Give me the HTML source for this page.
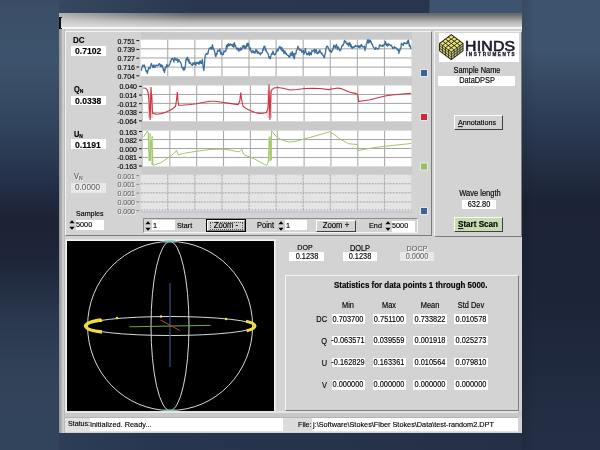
<!DOCTYPE html>
<html><head><meta charset="utf-8"><style>
*{margin:0;padding:0;box-sizing:border-box}
html,body{width:600px;height:450px;overflow:hidden}
body{position:relative;background:#26344e;font-family:"Liberation Sans", sans-serif;}
.a{position:absolute}
.t{position:absolute;white-space:nowrap;line-height:1;will-change:transform;-webkit-text-stroke:0.14px currentColor;transform:scaleY(1.1);transform-origin:0 70%}
</style></head><body>
<div class="a" style="left:0;top:0;width:59px;height:450px;background:linear-gradient(180deg,#3a4c64 0px,#3b5068 12px,#3d526c 60px,#33465f 120px,#25304a 180px,#1c2234 220px,#1e2538 260px,#2a384f 320px,#324359 380px,#32445c 450px)"></div>
<div class="a" style="left:522px;top:0;width:78px;height:450px;background:linear-gradient(180deg,#3e546e 0px,#3e546e 50px,#2c3c56 120px,#1c2336 200px,#1c2438 300px,#232e44 420px,#242f46 450px)"></div>
<div class="a" style="left:59px;top:433px;width:463px;height:17px;background:linear-gradient(90deg,#2e3e58 0px,#28354e 100px,#262f48 463px)"></div>
<div class="a" style="left:59px;top:0;width:463px;height:13px;background:linear-gradient(90deg,#36485f 0px,#2a374e 140px,#29354d 370px,#3e546e 371px,#3e546e 463px)"></div>
<div class="a" style="left:522px;top:0;width:14px;height:450px;background:linear-gradient(90deg,rgba(10,14,24,0.12),rgba(10,14,24,0))"></div>
<div class="a" style="left:59px;top:13px;width:463px;height:420px;background:#d3d3d3;"></div>
<div class="a" style="left:59px;top:13px;width:463px;height:19px;background:linear-gradient(180deg,#62686c 0px,#6c7074 2px,#808486 4px,#9c9e9e 6.5px,#b6b6b6 9px,#c8c8c8 12px,#d4d4d4 13.8px,#f6f6f6 14.4px,#f6f6f6 15.6px,#cdcdcd 16.2px,#d2d2d2 18px)"></div>
<div class="a" style="left:59px;top:13px;width:463px;height:14px;background:linear-gradient(90deg,rgba(225,225,225,0.6) 0px,rgba(225,225,225,0.35) 50px,rgba(225,225,225,0) 130px)"></div>
<div class="a" style="left:59px;top:17px;width:1.7999999999999972px;height:12px;background:#111;"></div>
<div class="a" style="left:59px;top:17px;width:2.799999999999997px;height:1.3000000000000007px;background:#111;"></div>
<div class="a" style="left:59px;top:27.5px;width:2.799999999999997px;height:1.5px;background:#111;"></div>
<div class="a" style="left:59px;top:29px;width:6px;height:404px;background:linear-gradient(90deg,#9a9a9a 0px,#a4a4a4 2px,#d6d6d6 4px,#b0b0b0 6px)"></div>
<div class="a" style="left:65px;top:31px;width:367px;height:205px;border-top:1px solid #f4f4f4;border-left:1px solid #f4f4f4;border-right:1px solid #7c7c7c;border-bottom:1px solid #7c7c7c"></div>
<div class="a" style="left:434px;top:31px;width:88px;height:206px;border-top:1px solid #f4f4f4;border-left:1px solid #f4f4f4;border-right:1px solid #7c7c7c;border-bottom:1px solid #7c7c7c"></div>
<div class="a" style="left:141px;top:32px;width:271px;height:181px;background:#cacaca;"></div>
<svg class="a" style="left:0;top:0" width="600" height="450" viewBox="0 0 600 450">
<rect x="140.7" y="39.7" width="270.8" height="36.5" fill="#ffffff"/>
<line x1="167.78" y1="39.7" x2="167.78" y2="76.2" stroke="#a4a4a4" stroke-width="1"/>
<line x1="194.86" y1="39.7" x2="194.86" y2="76.2" stroke="#a4a4a4" stroke-width="1"/>
<line x1="221.94" y1="39.7" x2="221.94" y2="76.2" stroke="#a4a4a4" stroke-width="1"/>
<line x1="249.02" y1="39.7" x2="249.02" y2="76.2" stroke="#a4a4a4" stroke-width="1"/>
<line x1="276.10" y1="39.7" x2="276.10" y2="76.2" stroke="#a4a4a4" stroke-width="1"/>
<line x1="303.18" y1="39.7" x2="303.18" y2="76.2" stroke="#a4a4a4" stroke-width="1"/>
<line x1="330.26" y1="39.7" x2="330.26" y2="76.2" stroke="#a4a4a4" stroke-width="1"/>
<line x1="357.34" y1="39.7" x2="357.34" y2="76.2" stroke="#a4a4a4" stroke-width="1"/>
<line x1="384.42" y1="39.7" x2="384.42" y2="76.2" stroke="#a4a4a4" stroke-width="1"/>
<line x1="140.7" y1="48.83" x2="411.5" y2="48.83" stroke="#a4a4a4" stroke-width="1"/>
<line x1="140.7" y1="57.95" x2="411.5" y2="57.95" stroke="#a4a4a4" stroke-width="1"/>
<line x1="140.7" y1="67.08" x2="411.5" y2="67.08" stroke="#a4a4a4" stroke-width="1"/>
<rect x="143.0" y="85.5" width="268.5" height="35.8" fill="#ffffff"/>
<line x1="169.85" y1="85.5" x2="169.85" y2="121.3" stroke="#a4a4a4" stroke-width="1"/>
<line x1="196.70" y1="85.5" x2="196.70" y2="121.3" stroke="#a4a4a4" stroke-width="1"/>
<line x1="223.55" y1="85.5" x2="223.55" y2="121.3" stroke="#a4a4a4" stroke-width="1"/>
<line x1="250.40" y1="85.5" x2="250.40" y2="121.3" stroke="#a4a4a4" stroke-width="1"/>
<line x1="277.25" y1="85.5" x2="277.25" y2="121.3" stroke="#a4a4a4" stroke-width="1"/>
<line x1="304.10" y1="85.5" x2="304.10" y2="121.3" stroke="#a4a4a4" stroke-width="1"/>
<line x1="330.95" y1="85.5" x2="330.95" y2="121.3" stroke="#a4a4a4" stroke-width="1"/>
<line x1="357.80" y1="85.5" x2="357.80" y2="121.3" stroke="#a4a4a4" stroke-width="1"/>
<line x1="384.65" y1="85.5" x2="384.65" y2="121.3" stroke="#a4a4a4" stroke-width="1"/>
<line x1="143.0" y1="94.45" x2="411.5" y2="94.45" stroke="#a4a4a4" stroke-width="1"/>
<line x1="143.0" y1="103.40" x2="411.5" y2="103.40" stroke="#a4a4a4" stroke-width="1"/>
<line x1="143.0" y1="112.35" x2="411.5" y2="112.35" stroke="#a4a4a4" stroke-width="1"/>
<rect x="143.0" y="130.6" width="268.5" height="35.80000000000001" fill="#ffffff"/>
<line x1="169.85" y1="130.6" x2="169.85" y2="166.4" stroke="#a4a4a4" stroke-width="1"/>
<line x1="196.70" y1="130.6" x2="196.70" y2="166.4" stroke="#a4a4a4" stroke-width="1"/>
<line x1="223.55" y1="130.6" x2="223.55" y2="166.4" stroke="#a4a4a4" stroke-width="1"/>
<line x1="250.40" y1="130.6" x2="250.40" y2="166.4" stroke="#a4a4a4" stroke-width="1"/>
<line x1="277.25" y1="130.6" x2="277.25" y2="166.4" stroke="#a4a4a4" stroke-width="1"/>
<line x1="304.10" y1="130.6" x2="304.10" y2="166.4" stroke="#a4a4a4" stroke-width="1"/>
<line x1="330.95" y1="130.6" x2="330.95" y2="166.4" stroke="#a4a4a4" stroke-width="1"/>
<line x1="357.80" y1="130.6" x2="357.80" y2="166.4" stroke="#a4a4a4" stroke-width="1"/>
<line x1="384.65" y1="130.6" x2="384.65" y2="166.4" stroke="#a4a4a4" stroke-width="1"/>
<line x1="143.0" y1="139.55" x2="411.5" y2="139.55" stroke="#a4a4a4" stroke-width="1"/>
<line x1="143.0" y1="148.50" x2="411.5" y2="148.50" stroke="#a4a4a4" stroke-width="1"/>
<line x1="143.0" y1="157.45" x2="411.5" y2="157.45" stroke="#a4a4a4" stroke-width="1"/>
<rect x="140.7" y="174.7" width="270.8" height="36.30000000000001" fill="#e4e4e4"/>
<line x1="167.78" y1="174.7" x2="167.78" y2="211" stroke="#a4a4a4" stroke-width="1" stroke-dasharray="2 1"/>
<line x1="194.86" y1="174.7" x2="194.86" y2="211" stroke="#a4a4a4" stroke-width="1" stroke-dasharray="2 1"/>
<line x1="221.94" y1="174.7" x2="221.94" y2="211" stroke="#a4a4a4" stroke-width="1" stroke-dasharray="2 1"/>
<line x1="249.02" y1="174.7" x2="249.02" y2="211" stroke="#a4a4a4" stroke-width="1" stroke-dasharray="2 1"/>
<line x1="276.10" y1="174.7" x2="276.10" y2="211" stroke="#a4a4a4" stroke-width="1" stroke-dasharray="2 1"/>
<line x1="303.18" y1="174.7" x2="303.18" y2="211" stroke="#a4a4a4" stroke-width="1" stroke-dasharray="2 1"/>
<line x1="330.26" y1="174.7" x2="330.26" y2="211" stroke="#a4a4a4" stroke-width="1" stroke-dasharray="2 1"/>
<line x1="357.34" y1="174.7" x2="357.34" y2="211" stroke="#a4a4a4" stroke-width="1" stroke-dasharray="2 1"/>
<line x1="384.42" y1="174.7" x2="384.42" y2="211" stroke="#a4a4a4" stroke-width="1" stroke-dasharray="2 1"/>
<line x1="140.7" y1="183.77" x2="411.5" y2="183.77" stroke="#a4a4a4" stroke-width="1" stroke-dasharray="2 1"/>
<line x1="140.7" y1="192.85" x2="411.5" y2="192.85" stroke="#a4a4a4" stroke-width="1" stroke-dasharray="2 1"/>
<line x1="140.7" y1="201.93" x2="411.5" y2="201.93" stroke="#a4a4a4" stroke-width="1" stroke-dasharray="2 1"/>
<path d="M140.9 70.5 L141.4 69.9 L141.9 67.5 L142.4 66.2 L142.9 65.0 L143.4 65.4 L143.9 66.4 L144.4 65.1 L144.9 67.3 L145.4 68.4 L145.9 70.6 L146.4 71.7 L146.9 70.8 L147.4 73.5 L147.9 70.6 L148.4 69.0 L148.9 67.3 L149.4 68.0 L149.9 68.7 L150.4 66.7 L150.9 65.1 L151.4 63.4 L151.9 65.5 L152.4 65.7 L152.9 67.6 L153.4 67.0 L153.9 65.0 L154.4 67.3 L154.9 66.1 L155.4 67.0 L155.9 65.1 L156.4 65.1 L156.9 65.3 L157.4 65.3 L157.9 65.8 L158.4 65.0 L158.9 64.0 L159.4 63.6 L159.9 64.3 L160.4 66.5 L160.9 64.3 L161.4 66.1 L161.9 66.9 L162.4 65.4 L162.9 67.8 L163.4 70.5 L163.9 69.2 L164.4 72.6 L164.9 70.4 L165.4 67.1 L165.9 67.7 L166.4 66.5 L166.9 64.4 L167.4 66.6 L167.9 65.9 L168.4 65.9 L168.9 66.1 L169.4 64.6 L169.9 64.0 L170.4 61.1 L170.9 61.8 L171.4 58.8 L171.9 59.0 L172.4 58.4 L172.9 59.1 L173.4 59.9 L173.9 62.1 L174.4 57.8 L174.9 57.9 L175.4 59.4 L175.9 60.3 L176.4 60.2 L176.9 58.6 L177.4 59.1 L177.9 62.3 L178.4 60.5 L178.9 59.6 L179.4 61.5 L179.9 61.7 L180.4 61.9 L180.9 63.3 L181.4 64.9 L181.9 67.6 L182.4 67.7 L182.9 68.8 L183.4 70.1 L183.9 67.3 L184.4 69.9 L184.9 68.7 L185.4 65.7 L185.9 59.8 L186.4 58.4 L186.9 59.9 L187.4 57.3 L187.9 59.7 L188.4 61.6 L188.9 59.4 L189.4 63.4 L189.9 62.8 L190.4 62.6 L190.9 63.8 L191.4 64.8 L191.9 64.5 L192.4 65.4 L192.9 63.0 L193.4 62.9 L193.9 64.3 L194.4 63.1 L194.9 62.2 L195.4 64.4 L195.9 65.2 L196.4 63.1 L196.9 62.1 L197.4 63.4 L197.9 63.1 L198.4 62.7 L198.9 64.4 L199.4 61.4 L199.9 63.7 L200.4 61.0 L200.9 61.8 L201.4 63.7 L201.9 61.1 L202.4 59.5 L202.9 63.9 L203.4 68.7 L203.9 70.5 L204.4 65.2 L204.9 58.6 L205.4 54.9 L205.9 54.8 L206.4 53.6 L206.9 54.0 L207.4 53.3 L207.9 54.0 L208.4 51.1 L208.9 49.2 L209.4 48.3 L209.9 47.9 L210.4 48.8 L210.9 47.2 L211.4 47.9 L211.9 49.4 L212.4 44.7 L212.9 46.9 L213.4 48.9 L213.9 49.6 L214.4 50.5 L214.9 52.3 L215.4 56.0 L215.9 56.6 L216.4 53.5 L216.9 54.6 L217.4 50.8 L217.9 50.0 L218.4 50.9 L218.9 51.1 L219.4 51.6 L219.9 49.0 L220.4 52.1 L220.9 54.3 L221.4 52.3 L221.9 53.8 L222.4 54.7 L222.9 54.2 L223.4 54.6 L223.9 50.6 L224.4 51.8 L224.9 51.5 L225.4 51.6 L225.9 51.0 L226.4 45.5 L226.9 48.7 L227.4 44.6 L227.9 46.6 L228.4 43.6 L228.9 45.0 L229.4 45.6 L229.9 43.8 L230.4 44.3 L230.9 45.2 L231.4 44.6 L231.9 44.5 L232.4 46.4 L232.9 45.6 L233.4 43.9 L233.9 47.3 L234.4 42.6 L234.9 45.8 L235.4 45.4 L235.9 46.9 L236.4 48.5 L236.9 49.0 L237.4 49.9 L237.9 47.9 L238.4 48.4 L238.9 51.4 L239.4 49.7 L239.9 49.0 L240.4 47.8 L240.9 50.3 L241.4 49.0 L241.9 49.4 L242.4 46.3 L242.9 47.0 L243.4 45.4 L243.9 47.2 L244.4 48.3 L244.9 45.6 L245.4 48.6 L245.9 48.1 L246.4 46.9 L246.9 43.6 L247.4 46.2 L247.9 43.2 L248.4 43.7 L248.9 46.4 L249.4 48.1 L249.9 50.1 L250.4 47.9 L250.9 51.0 L251.4 52.1 L251.9 52.7 L252.4 50.9 L252.9 50.4 L253.4 52.5 L253.9 51.6 L254.4 51.8 L254.9 53.4 L255.4 51.6 L255.9 49.4 L256.4 51.7 L256.9 50.1 L257.4 53.3 L257.9 52.9 L258.4 51.9 L258.9 52.8 L259.4 53.9 L259.9 53.3 L260.4 54.9 L260.9 52.8 L261.4 53.3 L261.9 53.0 L262.4 52.3 L262.9 48.9 L263.4 50.1 L263.9 46.4 L264.4 46.9 L264.9 46.2 L265.4 50.7 L265.9 49.0 L266.4 51.3 L266.9 51.9 L267.4 52.8 L267.9 53.0 L268.4 55.0 L268.9 57.8 L269.4 56.8 L269.9 58.4 L270.4 58.7 L270.9 56.1 L271.4 53.7 L271.9 53.4 L272.4 54.1 L272.9 51.0 L273.4 52.5 L273.9 54.7 L274.4 54.8 L274.9 54.2 L275.4 54.4 L275.9 53.0 L276.4 50.8 L276.9 49.7 L277.4 50.1 L277.9 51.2 L278.4 48.8 L278.9 47.8 L279.4 47.3 L279.9 46.4 L280.4 48.5 L280.9 47.8 L281.4 50.1 L281.9 47.4 L282.4 51.2 L282.9 50.7 L283.4 49.9 L283.9 53.6 L284.4 53.1 L284.9 51.0 L285.4 52.7 L285.9 54.1 L286.4 53.4 L286.9 54.9 L287.4 55.0 L287.9 55.4 L288.4 55.5 L288.9 57.1 L289.4 56.9 L289.9 57.1 L290.4 53.2 L290.9 55.6 L291.4 55.1 L291.9 52.3 L292.4 51.6 L292.9 56.1 L293.4 53.6 L293.9 57.9 L294.4 58.7 L294.9 53.3 L295.4 53.7 L295.9 53.8 L296.4 50.3 L296.9 49.9 L297.4 49.1 L297.9 46.2 L298.4 47.8 L298.9 48.9 L299.4 50.1 L299.9 49.8 L300.4 50.2 L300.9 49.5 L301.4 50.6 L301.9 52.4 L302.4 51.8 L302.9 50.7 L303.4 50.6 L303.9 54.4 L304.4 52.5 L304.9 51.8 L305.4 48.4 L305.9 52.7 L306.4 53.0 L306.9 54.9 L307.4 53.9 L307.9 53.5 L308.4 54.4 L308.9 51.7 L309.4 55.3 L309.9 54.4 L310.4 52.7 L310.9 54.5 L311.4 54.6 L311.9 50.4 L312.4 50.8 L312.9 51.4 L313.4 50.8 L313.9 49.9 L314.4 49.4 L314.9 53.1 L315.4 52.0 L315.9 49.6 L316.4 49.6 L316.9 53.3 L317.4 52.6 L317.9 53.8 L318.4 52.8 L318.9 51.0 L319.4 52.5 L319.9 49.9 L320.4 51.7 L320.9 52.7 L321.4 53.9 L321.9 53.0 L322.4 54.2 L322.9 55.3 L323.4 55.8 L323.9 57.2 L324.4 57.7 L324.9 54.7 L325.4 52.8 L325.9 49.2 L326.4 47.2 L326.9 46.4 L327.4 46.2 L327.9 46.8 L328.4 48.3 L328.9 49.2 L329.4 50.6 L329.9 51.4 L330.4 50.2 L330.9 51.9 L331.4 52.4 L331.9 51.2 L332.4 49.6 L332.9 49.5 L333.4 47.0 L333.9 45.1 L334.4 46.9 L334.9 45.9 L335.4 48.0 L335.9 46.0 L336.4 44.4 L336.9 46.3 L337.4 49.5 L337.9 47.7 L338.4 47.0 L338.9 48.2 L339.4 50.2 L339.9 50.7 L340.4 49.5 L340.9 49.8 L341.4 47.7 L341.9 45.7 L342.4 45.2 L342.9 45.7 L343.4 44.2 L343.9 43.6 L344.4 40.5 L344.9 41.0 L345.4 42.2 L345.9 41.6 L346.4 43.6 L346.9 43.6 L347.4 44.4 L347.9 43.1 L348.4 46.1 L348.9 44.5 L349.4 42.6 L349.9 42.8 L350.4 46.6 L350.9 44.4 L351.4 47.0 L351.9 48.2 L352.4 48.3 L352.9 46.6 L353.4 47.5 L353.9 47.1 L354.4 47.3 L354.9 46.2 L355.4 45.4 L355.9 46.5 L356.4 46.3 L356.9 46.0 L357.4 46.0 L357.9 46.0 L358.4 47.4 L358.9 45.7 L359.4 46.6 L359.9 47.6 L360.4 45.7 L360.9 46.6 L361.4 44.4 L361.9 45.6 L362.4 46.7 L362.9 47.1 L363.4 46.8 L363.9 47.1 L364.4 46.3 L364.9 50.5 L365.4 48.0 L365.9 47.3 L366.4 43.7 L366.9 43.2 L367.4 40.0 L367.9 42.7 L368.4 42.9 L368.9 39.6 L369.4 41.7 L369.9 42.5 L370.4 40.4 L370.9 41.2 L371.4 42.9 L371.9 44.3 L372.4 44.2 L372.9 46.3 L373.4 46.9 L373.9 47.7 L374.4 48.1 L374.9 49.4 L375.4 49.4 L375.9 47.1 L376.4 48.5 L376.9 48.4 L377.4 48.9 L377.9 49.4 L378.4 48.7 L378.9 48.4 L379.4 45.2 L379.9 44.7 L380.4 46.0 L380.9 45.8 L381.4 45.6 L381.9 45.9 L382.4 45.1 L382.9 46.5 L383.4 45.8 L383.9 44.9 L384.4 43.9 L384.9 44.2 L385.4 41.4 L385.9 43.8 L386.4 45.3 L386.9 43.9 L387.4 46.2 L387.9 45.9 L388.4 43.8 L388.9 44.8 L389.4 44.3 L389.9 44.9 L390.4 45.5 L390.9 45.5 L391.4 45.2 L391.9 46.7 L392.4 47.5 L392.9 48.7 L393.4 48.3 L393.9 47.3 L394.4 46.8 L394.9 48.0 L395.4 47.8 L395.9 47.5 L396.4 48.8 L396.9 48.5 L397.4 49.4 L397.9 50.3 L398.4 49.7 L398.9 53.4 L399.4 50.2 L399.9 50.6 L400.4 48.4 L400.9 48.3 L401.4 43.2 L401.9 44.1 L402.4 44.5 L402.9 44.3 L403.4 45.6 L403.9 42.6 L404.4 43.4 L404.9 43.2 L405.4 43.7 L405.9 43.5 L406.4 43.1 L406.9 43.8 L407.4 41.2 L407.9 43.0 L408.4 40.1 L408.9 42.9 L409.4 46.4 L409.9 45.0 L410.4 46.7 L410.9 49.0" fill="none" stroke="#3d6f9e" stroke-width="1.3" stroke-linejoin="round"/>
<rect x="148" y="95" width="5" height="23" fill="#f4c4c8"/><rect x="267.5" y="90" width="4.5" height="28" fill="#f4c4c8"/>
<path d="M143.0 88.0 L145.5 88.2 L147.0 89.5 L148.0 92.0 L148.8 98.0 L149.5 110.0 L150.2 120.0 L150.6 100.0 L151.0 87.0 L151.8 100.0 L152.5 113.0 L154.0 113.6 L157.0 114.2 L161.0 113.6 L165.0 112.5 L169.0 110.7 L173.0 108.5 L175.5 106.5 L176.5 100.0 L177.3 92.0 L178.0 101.0 L178.6 105.2 L182.3 105.3 L190.0 104.5 L196.3 103.7 L204.0 102.3 L210.3 101.3 L215.0 101.2 L222.0 102.2 L231.3 103.6 L238.0 104.6 L239.8 101.0 L240.7 92.5 L241.5 99.0 L243.0 106.0 L246.0 108.6 L250.0 110.5 L255.0 112.5 L259.3 113.4 L263.0 113.3 L266.5 112.5 L268.0 108.0 L268.6 98.0 L269.0 84.5 L269.5 105.0 L269.9 120.0 L270.5 103.0 L271.0 92.0 L272.0 89.5 L274.0 88.0 L277.5 87.5 L283.0 88.3 L290.0 90.0 L297.0 89.5 L305.0 88.5 L312.0 88.4 L320.0 88.5 L328.8 89.6 L333.0 88.8 L337.5 88.0 L341.0 88.6 L345.0 90.3 L350.0 92.2 L355.0 93.4 L357.5 94.2 L358.8 101.5 L362.0 101.0 L370.0 99.8 L377.0 98.0 L385.0 96.0 L392.0 95.0 L400.0 94.2 L405.0 93.8 L411.0 93.3" fill="none" stroke="#cc3444" stroke-width="1.1"/>
<rect x="148" y="133" width="3" height="28" fill="#c4e09c"/><rect x="151.3" y="136" width="1.8" height="29" fill="#b4d88a"/><rect x="268.2" y="136.3" width="3.4" height="25" fill="#c4e09c"/>
<path d="M143.5 137.0 L145.5 134.0 L147.5 131.0 L148.2 133.0 L149.0 150.0 L150.0 161.0 L151.0 140.0 L152.0 150.0 L153.0 165.5 L157.0 164.0 L161.3 162.5 L167.0 158.5 L173.0 154.3 L175.5 151.5 L176.5 150.0 L177.5 153.0 L178.8 155.2 L181.0 154.0 L184.7 153.2 L195.0 151.5 L208.0 149.7 L215.0 149.3 L222.0 149.2 L230.0 150.0 L238.3 151.8 L240.5 151.0 L241.8 149.5 L243.0 153.0 L244.5 155.2 L250.0 157.0 L254.7 159.0 L260.0 162.0 L266.7 165.5 L268.2 162.0 L269.0 150.0 L270.0 138.0 L271.0 160.0 L271.5 130.5 L274.0 134.0 L277.5 137.5 L283.0 140.5 L288.8 142.0 L295.0 141.5 L304.0 139.0 L315.0 136.0 L322.0 134.0 L329.6 131.8 L335.0 135.0 L340.0 139.0 L348.3 143.7 L357.3 144.5 L358.3 150.6 L362.0 149.8 L370.0 148.3 L380.0 146.8 L395.0 145.2 L411.0 143.5" fill="none" stroke="#a4c46c" stroke-width="1"/>
<line x1="140.7" y1="210" x2="411.5" y2="210" stroke="#8aa0c0" stroke-width="1" stroke-dasharray="1.5 1.5"/>
<line x1="136.4" y1="40.60" x2="139.2" y2="40.60" stroke="#000" stroke-width="0.9"/>
<line x1="136.4" y1="49.40" x2="139.2" y2="49.40" stroke="#000" stroke-width="0.9"/>
<line x1="136.4" y1="58.20" x2="139.2" y2="58.20" stroke="#000" stroke-width="0.9"/>
<line x1="136.4" y1="67.00" x2="139.2" y2="67.00" stroke="#000" stroke-width="0.9"/>
<line x1="136.4" y1="75.80" x2="139.2" y2="75.80" stroke="#000" stroke-width="0.9"/>
<line x1="139.0" y1="86.40" x2="141.8" y2="86.40" stroke="#000" stroke-width="0.9"/>
<line x1="139.0" y1="95.03" x2="141.8" y2="95.03" stroke="#000" stroke-width="0.9"/>
<line x1="139.0" y1="103.65" x2="141.8" y2="103.65" stroke="#000" stroke-width="0.9"/>
<line x1="139.0" y1="112.27" x2="141.8" y2="112.27" stroke="#000" stroke-width="0.9"/>
<line x1="139.0" y1="120.90" x2="141.8" y2="120.90" stroke="#000" stroke-width="0.9"/>
<line x1="139.0" y1="131.50" x2="141.8" y2="131.50" stroke="#000" stroke-width="0.9"/>
<line x1="139.0" y1="140.12" x2="141.8" y2="140.12" stroke="#000" stroke-width="0.9"/>
<line x1="139.0" y1="148.75" x2="141.8" y2="148.75" stroke="#000" stroke-width="0.9"/>
<line x1="139.0" y1="157.38" x2="141.8" y2="157.38" stroke="#000" stroke-width="0.9"/>
<line x1="139.0" y1="166.00" x2="141.8" y2="166.00" stroke="#000" stroke-width="0.9"/>
<line x1="136.4" y1="175.60" x2="139.2" y2="175.60" stroke="#808080" stroke-width="0.9"/>
<line x1="136.4" y1="184.35" x2="139.2" y2="184.35" stroke="#808080" stroke-width="0.9"/>
<line x1="136.4" y1="193.10" x2="139.2" y2="193.10" stroke="#808080" stroke-width="0.9"/>
<line x1="136.4" y1="201.85" x2="139.2" y2="201.85" stroke="#808080" stroke-width="0.9"/>
<line x1="136.4" y1="210.60" x2="139.2" y2="210.60" stroke="#808080" stroke-width="0.9"/>
<rect x="420" y="69" width="8" height="8" fill="#e4e8ec"/>
<rect x="421" y="70" width="6" height="6" fill="#3a6494"/>
<rect x="420" y="113" width="8" height="8" fill="#e4e8ec"/>
<rect x="421" y="114" width="6" height="6" fill="#d02838"/>
<rect x="420" y="162.5" width="8" height="8" fill="#e4e8ec"/>
<rect x="421" y="163.5" width="6" height="6" fill="#98c060"/>
<rect x="420" y="207" width="8" height="8" fill="#e4e8ec"/>
<rect x="421" y="208" width="6" height="6" fill="#3a6494"/>
</svg>
<div class="t" style="left:94.60px;width:40px;text-align:right;top:37.62px;font-size:7.0px;font-weight:normal;color:#000;">0.751</div>
<div class="t" style="left:94.60px;width:40px;text-align:right;top:46.42px;font-size:7.0px;font-weight:normal;color:#000;">0.739</div>
<div class="t" style="left:94.60px;width:40px;text-align:right;top:55.22px;font-size:7.0px;font-weight:normal;color:#000;">0.727</div>
<div class="t" style="left:94.60px;width:40px;text-align:right;top:64.02px;font-size:7.0px;font-weight:normal;color:#000;">0.716</div>
<div class="t" style="left:94.60px;width:40px;text-align:right;top:72.82px;font-size:7.0px;font-weight:normal;color:#000;">0.704</div>
<div class="t" style="left:97.30px;width:40px;text-align:right;top:83.42px;font-size:7.0px;font-weight:normal;color:#000;">0.040</div>
<div class="t" style="left:97.30px;width:40px;text-align:right;top:92.05px;font-size:7.0px;font-weight:normal;color:#000;">0.014</div>
<div class="t" style="left:97.30px;width:40px;text-align:right;top:100.67px;font-size:7.0px;font-weight:normal;color:#000;">-0.012</div>
<div class="t" style="left:97.30px;width:40px;text-align:right;top:109.29px;font-size:7.0px;font-weight:normal;color:#000;">-0.038</div>
<div class="t" style="left:97.30px;width:40px;text-align:right;top:117.92px;font-size:7.0px;font-weight:normal;color:#000;">-0.064</div>
<div class="t" style="left:97.30px;width:40px;text-align:right;top:128.52px;font-size:7.0px;font-weight:normal;color:#000;">0.163</div>
<div class="t" style="left:97.30px;width:40px;text-align:right;top:137.15px;font-size:7.0px;font-weight:normal;color:#000;">0.082</div>
<div class="t" style="left:97.30px;width:40px;text-align:right;top:145.77px;font-size:7.0px;font-weight:normal;color:#000;">0.000</div>
<div class="t" style="left:97.30px;width:40px;text-align:right;top:154.40px;font-size:7.0px;font-weight:normal;color:#000;">-0.081</div>
<div class="t" style="left:97.30px;width:40px;text-align:right;top:163.02px;font-size:7.0px;font-weight:normal;color:#000;">-0.163</div>
<div class="t" style="left:94.90px;width:40px;text-align:right;top:172.62px;font-size:7.0px;font-weight:normal;color:#6a6a6a;text-shadow:0.8px 0.8px 0 #fff">0.001</div>
<div class="t" style="left:94.90px;width:40px;text-align:right;top:181.37px;font-size:7.0px;font-weight:normal;color:#6a6a6a;text-shadow:0.8px 0.8px 0 #fff">0.001</div>
<div class="t" style="left:94.90px;width:40px;text-align:right;top:190.12px;font-size:7.0px;font-weight:normal;color:#6a6a6a;text-shadow:0.8px 0.8px 0 #fff">0.001</div>
<div class="t" style="left:94.90px;width:40px;text-align:right;top:198.87px;font-size:7.0px;font-weight:normal;color:#6a6a6a;text-shadow:0.8px 0.8px 0 #fff">0.000</div>
<div class="t" style="left:94.90px;width:40px;text-align:right;top:207.62px;font-size:7.0px;font-weight:normal;color:#6a6a6a;text-shadow:0.8px 0.8px 0 #fff">0.000</div>
<div class="t" style="left:72.62px;top:36.78px;font-size:8px;font-weight:bold;color:#000;">DC</div>
<div class="a" style="left:71.4px;top:45.8px;width:34.39999999999999px;height:9.800000000000004px;background:#fff;"></div>
<div class="t" style="left:75.28px;top:47.30px;font-size:8.6px;font-weight:bold;color:#000;">0.7102</div>
<div class="t" style="left:74.31px;top:86.06px;font-size:7.4px;font-weight:bold;color:#000;">Q<span style="font-size:5px;vertical-align:-1px">N</span></div>
<div class="a" style="left:71.4px;top:95.5px;width:34.39999999999999px;height:9.400000000000006px;background:#fff;"></div>
<div class="t" style="left:75.28px;top:96.60px;font-size:8.6px;font-weight:bold;color:#000;">0.0338</div>
<div class="t" style="left:74.31px;top:131.36px;font-size:7.4px;font-weight:bold;color:#000;">U<span style="font-size:5px;vertical-align:-1px">N</span></div>
<div class="a" style="left:71.4px;top:139.2px;width:34.39999999999999px;height:9.5px;background:#fff;"></div>
<div class="t" style="left:75.28px;top:140.60px;font-size:8.6px;font-weight:bold;color:#000;">0.1191</div>
<div class="t" style="left:73.86px;top:173.46px;font-size:7.4px;font-weight:normal;color:#5a5a5a;text-shadow:0.8px 0.8px 0 #fff">V<span style="font-size:5px;vertical-align:-1px">N</span></div>
<div class="a" style="left:71.4px;top:183px;width:34.39999999999999px;height:9.800000000000011px;background:#e8e8e8;"></div>
<div class="t" style="left:75.11px;top:184.15px;font-size:8.2px;font-weight:normal;color:#6a6a6a;text-shadow:0.8px 0.8px 0 #fff">0.0000</div>
<div class="t" style="left:76.27px;top:211.31px;font-size:7.1px;font-weight:normal;color:#000;">Samples</div>
<div class="a" style="left:76px;top:219.7px;width:28px;height:10.200000000000017px;background:#fff;"></div>
<div class="t" style="left:76.36px;top:221.08px;font-size:7.3px;font-weight:normal;color:#000;">5000</div>
<svg class="a" style="left:69px;top:220px" width="6" height="10" viewBox="0 0 6 10"><path d="M3 0.3 L5.6 3.2 L0.4 3.2Z M0.4 6.8 L5.6 6.8 L3 9.7Z" fill="#000"/></svg>
<div class="a" style="left:143px;top:218px;width:275px;height:15px;border-top:1px solid #8a8a8a;border-left:1px solid #8a8a8a;border-bottom:1px solid #f4f4f4;border-right:1px solid #f4f4f4"></div>
<svg class="a" style="left:145px;top:220.5px" width="6" height="10" viewBox="0 0 6 10"><path d="M3 0.3 L5.6 3.2 L0.4 3.2Z M0.4 6.8 L5.6 6.8 L3 9.7Z" fill="#000"/></svg>
<div class="a" style="left:151.8px;top:220.3px;width:22.899999999999977px;height:10.0px;background:#fff;"></div>
<div class="t" style="left:152.56px;top:222.18px;font-size:7.3px;font-weight:normal;color:#000;">1</div>
<div class="t" style="left:176.97px;top:222.39px;font-size:7.2px;font-weight:normal;color:#000;">Start</div>
<div class="a" style="left:206px;top:219px;width:40px;height:13px;border:1px solid #000;background:#d3d3d3"></div>
<div class="a" style="left:207px;top:220px;width:38px;height:11px;border-top:1px solid #fff;border-left:1px solid #fff;border-right:1px solid #808080;border-bottom:1px solid #808080"></div>
<div class="a" style="left:209.5px;top:222px;width:33px;height:8px;border:1px dotted #555"></div>
<div class="t" style="left:206.00px;width:40px;text-align:center;top:222.32px;font-size:7.7px;font-weight:normal;color:#000;">Zoom -</div>
<div class="t" style="left:256.95px;top:222.35px;font-size:7.5px;font-weight:normal;color:#000;">Point</div>
<svg class="a" style="left:278px;top:220.5px" width="6" height="10" viewBox="0 0 6 10"><path d="M3 0.3 L5.6 3.2 L0.4 3.2Z M0.4 6.8 L5.6 6.8 L3 9.7Z" fill="#000"/></svg>
<div class="a" style="left:285px;top:220.3px;width:22px;height:10.0px;background:#fff;"></div>
<div class="t" style="left:285.56px;top:222.18px;font-size:7.3px;font-weight:normal;color:#000;">1</div>
<div class="a" style="left:316px;top:219.5px;width:40px;height:12px;border-top:1px solid #fff;border-left:1px solid #fff;border-right:1px solid #404040;border-bottom:1px solid #404040;background:#d3d3d3"></div>
<div class="t" style="left:316.00px;width:40px;text-align:center;top:222.32px;font-size:7.7px;font-weight:normal;color:#000;">Zoom +</div>
<div class="t" style="left:369.16px;top:222.38px;font-size:7.3px;font-weight:normal;color:#000;">End</div>
<svg class="a" style="left:385px;top:220.5px" width="6" height="10" viewBox="0 0 6 10"><path d="M3 0.3 L5.6 3.2 L0.4 3.2Z M0.4 6.8 L5.6 6.8 L3 9.7Z" fill="#000"/></svg>
<div class="a" style="left:391.7px;top:220.8px;width:23.80000000000001px;height:11.199999999999989px;background:#fff;"></div>
<div class="t" style="left:392.06px;top:222.08px;font-size:7.3px;font-weight:normal;color:#000;">5000</div>
<div class="a" style="left:438.5px;top:33px;width:80.0px;height:29px;background:#fff;"></div>
<div class="t" style="left:465px;top:39.4px;font-size:14.2px;color:#1a1c2e;transform:scaleX(1.115);transform-origin:0 0;-webkit-text-stroke:0.65px #1a1c2e;letter-spacing:0.2px">HINDS</div>
<div class="t" style="left:466px;top:52.6px;font-size:4.6px;font-weight:bold;color:#1a1c2e;-webkit-text-stroke:0.3px #1a1c2e;letter-spacing:1.55px;transform:scaleY(1.1);transform-origin:0 0">INSTRUMENTS</div>
<svg class="a" style="left:437px;top:32px" width="30" height="30" viewBox="437 32 30 30">
<polygon points="451.3,34.8 462.9,43.4 462.9,50.8 451.3,59.4 439.7,50.8 439.7,43.4" fill="#1c1a0a" stroke="#1c1a0a" stroke-width="1.2" stroke-linejoin="round"/>
<path d="M451.30 35.23L453.62 36.95L451.30 38.67L448.98 36.95ZM448.40 37.38L450.72 39.10L448.40 40.82L446.08 39.10ZM445.50 39.53L447.82 41.25L445.50 42.97L443.18 41.25ZM442.60 41.68L444.92 43.40L442.60 45.12L440.28 43.40ZM454.20 37.38L456.52 39.10L454.20 40.82L451.88 39.10ZM451.30 39.53L453.62 41.25L451.30 42.97L448.98 41.25ZM448.40 41.68L450.72 43.40L448.40 45.12L446.08 43.40ZM445.50 43.83L447.82 45.55L445.50 47.27L443.18 45.55ZM457.10 39.53L459.42 41.25L457.10 42.97L454.78 41.25ZM454.20 41.68L456.52 43.40L454.20 45.12L451.88 43.40ZM451.30 43.83L453.62 45.55L451.30 47.27L448.98 45.55ZM448.40 45.98L450.72 47.70L448.40 49.42L446.08 47.70ZM460.00 41.68L462.32 43.40L460.00 45.12L457.68 43.40ZM457.10 43.83L459.42 45.55L457.10 47.27L454.78 45.55ZM454.20 45.98L456.52 47.70L454.20 49.42L451.88 47.70ZM451.30 48.13L453.62 49.85L451.30 51.57L448.98 49.85Z" fill="#ece47c"/>
<path d="M440.05 43.95L442.25 45.59L442.25 47.46L440.05 45.83ZM440.05 46.42L442.25 48.05L442.25 49.93L440.05 48.30ZM440.05 48.89L442.25 50.52L442.25 52.40L440.05 50.76ZM442.95 46.10L445.15 47.74L445.15 49.61L442.95 47.98ZM442.95 48.57L445.15 50.20L445.15 52.08L442.95 50.45ZM442.95 51.04L445.15 52.67L445.15 54.55L442.95 52.91ZM445.85 48.25L448.05 49.89L448.05 51.76L445.85 50.13ZM445.85 50.72L448.05 52.35L448.05 54.23L445.85 52.60ZM445.85 53.19L448.05 54.82L448.05 56.70L445.85 55.06ZM448.75 50.40L450.95 52.04L450.95 53.91L448.75 52.28ZM448.75 52.87L450.95 54.50L450.95 56.38L448.75 54.75ZM448.75 55.34L450.95 56.97L450.95 58.85L448.75 57.21Z" fill="#cfc87a"/>
<path d="M451.65 52.04L453.85 50.40L453.85 52.28L451.65 53.91ZM451.65 54.50L453.85 52.87L453.85 54.75L451.65 56.38ZM451.65 56.97L453.85 55.34L453.85 57.21L451.65 58.85ZM454.55 49.89L456.75 48.25L456.75 50.13L454.55 51.76ZM454.55 52.35L456.75 50.72L456.75 52.60L454.55 54.23ZM454.55 54.82L456.75 53.19L456.75 55.06L454.55 56.70ZM457.45 47.74L459.65 46.10L459.65 47.98L457.45 49.61ZM457.45 50.20L459.65 48.57L459.65 50.45L457.45 52.08ZM457.45 52.67L459.65 51.04L459.65 52.91L457.45 54.55ZM460.35 45.59L462.55 43.95L462.55 45.83L460.35 47.46ZM460.35 48.05L462.55 46.42L462.55 48.30L460.35 49.93ZM460.35 50.52L462.55 48.89L462.55 50.76L460.35 52.40Z" fill="#b8b890"/>
</svg>
<div class="t" style="left:441.50px;width:70px;text-align:center;top:67.06px;font-size:7.4px;font-weight:normal;color:#000;">Sample Name</div>
<div class="a" style="left:438px;top:76px;width:77px;height:9.5px;background:#fff;"></div>
<div class="t" style="left:441.50px;width:70px;text-align:center;top:77.06px;font-size:7.4px;font-weight:normal;color:#000;">DataDPSP</div>
<div class="a" style="left:454px;top:115px;width:48.5px;height:15px;border-top:1px solid #fff;border-left:1px solid #fff;border-right:1px solid #404040;border-bottom:1px solid #404040;background:#d3d3d3"></div>
<div class="t" style="left:447.10px;width:60px;text-align:center;top:118.79px;font-size:7.2px;font-weight:normal;color:#000;"><u>A</u>nnotations</div>
<div class="t" style="left:449.70px;width:60px;text-align:center;top:189.75px;font-size:7.5px;font-weight:normal;color:#000;">Wave length</div>
<div class="a" style="left:461.7px;top:199.7px;width:34.0px;height:9.200000000000017px;background:#fff;"></div>
<div class="t" style="left:458.70px;width:40px;text-align:center;top:200.76px;font-size:7.4px;font-weight:normal;color:#000;">632.80</div>
<div class="a" style="left:454.3px;top:217.3px;width:48.5px;height:14.5px;border-top:1px solid #f4fff0;border-left:1px solid #f4fff0;border-right:1px solid #404040;border-bottom:1px solid #404040;background:#c6dcb0"></div>
<div class="t" style="left:448.00px;width:60px;text-align:center;top:221.47px;font-size:8.1px;font-weight:bold;color:#000;"><u>S</u>tart Scan</div>
<div class="a" style="left:64.5px;top:239px;width:211px;height:174px;background:#e6e6e6"></div>
<div class="a" style="left:65.5px;top:240px;width:209px;height:172px;background:#f2f2f2"></div>
<div class="a" style="left:66.7px;top:240.5px;width:207px;height:170.5px;background:#000"></div>
<svg class="a" style="left:66px;top:240px" width="208" height="171" viewBox="66 240 208 171">
<ellipse cx="170.1" cy="326" rx="82.5" ry="84.5" fill="none" stroke="#d4dcd8" stroke-width="1"/>
<ellipse cx="170" cy="326" rx="19" ry="84.5" fill="none" stroke="#d4dcd8" stroke-width="1"/>
<ellipse cx="170" cy="326" rx="85.3" ry="9.5" fill="none" stroke="#d4dcd8" stroke-width="1"/>
<line x1="170" y1="283" x2="170" y2="367" stroke="#34508e" stroke-width="1.2"/>
<line x1="129.5" y1="326.8" x2="210.6" y2="325.3" stroke="#78a848" stroke-width="1"/>
<line x1="160.5" y1="320" x2="179.7" y2="330.5" stroke="#c04830" stroke-width="1"/>
<path d="M101 320 Q86.5 322 85.5 326 Q86.5 330.5 102 332" fill="none" stroke="#eedc40" stroke-width="3.4"/>
<path d="M246 321.3 Q254.5 323 255 326 Q254.5 329 246.7 330.7" fill="none" stroke="#eedc40" stroke-width="3"/>
<circle cx="100.7" cy="320.5" r="1.7" fill="#eedc40"/>
<circle cx="117" cy="318" r="1.3" fill="#eedc40"/>
<circle cx="161" cy="316.5" r="1.3" fill="#eedc40"/>
<circle cx="226" cy="319" r="1.3" fill="#eedc40"/>
<ellipse cx="170" cy="241.5" rx="7" ry="1.3" fill="#70b8b0" opacity="0.8"/>
<ellipse cx="170" cy="410.5" rx="7" ry="1.3" fill="#70b8b0" opacity="0.8"/>
</svg>
<div class="t" style="left:285.25px;width:40px;text-align:center;top:245.41px;font-size:7.1px;font-weight:normal;color:#000;">DOP</div>
<div class="a" style="left:289.2px;top:251.7px;width:35.0px;height:9.300000000000011px;background:#fff;"></div>
<div class="t" style="left:286.90px;width:40px;text-align:center;top:252.86px;font-size:7.4px;font-weight:normal;color:#000;">0.1238</div>
<div class="t" style="left:339.60px;width:40px;text-align:center;top:245.36px;font-size:7.4px;font-weight:normal;color:#000;">DOLP</div>
<div class="a" style="left:342.5px;top:251.7px;width:34.19999999999999px;height:9.300000000000011px;background:#fff;"></div>
<div class="t" style="left:339.60px;width:40px;text-align:center;top:252.86px;font-size:7.4px;font-weight:normal;color:#000;">0.1238</div>
<div class="t" style="left:397.00px;width:40px;text-align:center;top:245.39px;font-size:7.2px;font-weight:normal;color:#6a6a6a;text-shadow:0.8px 0.8px 0 #fff">DOCP</div>
<div class="a" style="left:399.8px;top:251.8px;width:34.5px;height:9.199999999999989px;background:#e8e8e8;"></div>
<div class="t" style="left:397.00px;width:40px;text-align:center;top:252.86px;font-size:7.4px;font-weight:normal;color:#6a6a6a;text-shadow:0.8px 0.8px 0 #fff">0.0000</div>
<div class="a" style="left:285px;top:274.5px;width:233.5px;height:136px;border-top:1px solid #f4f4f4;border-left:1px solid #f4f4f4;border-right:1px solid #7c7c7c;border-bottom:1px solid #7c7c7c"></div>
<div class="t" style="left:333.72px;top:281.69px;font-size:7.95px;font-weight:bold;color:#000;">Statistics for data points 1 through 5000.</div>
<div class="t" style="left:323.45px;width:50px;text-align:center;top:301.76px;font-size:7.4px;font-weight:normal;color:#000;">Min</div>
<div class="t" style="left:364.25px;width:50px;text-align:center;top:301.76px;font-size:7.4px;font-weight:normal;color:#000;">Max</div>
<div class="t" style="left:404.75px;width:50px;text-align:center;top:301.76px;font-size:7.4px;font-weight:normal;color:#000;">Mean</div>
<div class="t" style="left:445.95px;width:50px;text-align:center;top:301.76px;font-size:7.4px;font-weight:normal;color:#000;">Std Dev</div>
<div class="t" style="left:306.90px;width:20px;text-align:right;top:316.16px;font-size:7.4px;font-weight:normal;color:#000;">DC</div>
<div class="a" style="left:331.7px;top:314.2px;width:33.5px;height:9.600000000000023px;background:#fff;"></div>
<div class="t" style="left:328.45px;width:40px;text-align:center;top:315.56px;font-size:7.4px;font-weight:normal;color:#000;">0.703700</div>
<div class="a" style="left:372.5px;top:314.2px;width:33.5px;height:9.600000000000023px;background:#fff;"></div>
<div class="t" style="left:369.25px;width:40px;text-align:center;top:315.56px;font-size:7.4px;font-weight:normal;color:#000;">0.751100</div>
<div class="a" style="left:413px;top:314.2px;width:33.5px;height:9.600000000000023px;background:#fff;"></div>
<div class="t" style="left:409.75px;width:40px;text-align:center;top:315.56px;font-size:7.4px;font-weight:normal;color:#000;">0.733822</div>
<div class="a" style="left:454.2px;top:314.2px;width:33.5px;height:9.600000000000023px;background:#fff;"></div>
<div class="t" style="left:450.95px;width:40px;text-align:center;top:315.56px;font-size:7.4px;font-weight:normal;color:#000;">0.010578</div>
<div class="t" style="left:306.90px;width:20px;text-align:right;top:337.76px;font-size:7.4px;font-weight:normal;color:#000;">Q</div>
<div class="a" style="left:331.7px;top:335.8px;width:33.5px;height:9.600000000000023px;background:#fff;"></div>
<div class="t" style="left:328.45px;width:40px;text-align:center;top:337.16px;font-size:7.4px;font-weight:normal;color:#000;">-0.063571</div>
<div class="a" style="left:372.5px;top:335.8px;width:33.5px;height:9.600000000000023px;background:#fff;"></div>
<div class="t" style="left:369.25px;width:40px;text-align:center;top:337.16px;font-size:7.4px;font-weight:normal;color:#000;">0.039559</div>
<div class="a" style="left:413px;top:335.8px;width:33.5px;height:9.600000000000023px;background:#fff;"></div>
<div class="t" style="left:409.75px;width:40px;text-align:center;top:337.16px;font-size:7.4px;font-weight:normal;color:#000;">0.001918</div>
<div class="a" style="left:454.2px;top:335.8px;width:33.5px;height:9.600000000000023px;background:#fff;"></div>
<div class="t" style="left:450.95px;width:40px;text-align:center;top:337.16px;font-size:7.4px;font-weight:normal;color:#000;">0.025273</div>
<div class="t" style="left:306.90px;width:20px;text-align:right;top:359.56px;font-size:7.4px;font-weight:normal;color:#000;">U</div>
<div class="a" style="left:331.7px;top:357.6px;width:33.5px;height:9.600000000000023px;background:#fff;"></div>
<div class="t" style="left:328.45px;width:40px;text-align:center;top:358.96px;font-size:7.4px;font-weight:normal;color:#000;">-0.162829</div>
<div class="a" style="left:372.5px;top:357.6px;width:33.5px;height:9.600000000000023px;background:#fff;"></div>
<div class="t" style="left:369.25px;width:40px;text-align:center;top:358.96px;font-size:7.4px;font-weight:normal;color:#000;">0.163361</div>
<div class="a" style="left:413px;top:357.6px;width:33.5px;height:9.600000000000023px;background:#fff;"></div>
<div class="t" style="left:409.75px;width:40px;text-align:center;top:358.96px;font-size:7.4px;font-weight:normal;color:#000;">0.010564</div>
<div class="a" style="left:454.2px;top:357.6px;width:33.5px;height:9.600000000000023px;background:#fff;"></div>
<div class="t" style="left:450.95px;width:40px;text-align:center;top:358.96px;font-size:7.4px;font-weight:normal;color:#000;">0.079810</div>
<div class="t" style="left:306.90px;width:20px;text-align:right;top:381.96px;font-size:7.4px;font-weight:normal;color:#000;">V</div>
<div class="a" style="left:331.7px;top:380px;width:33.5px;height:9.600000000000023px;background:#fff;"></div>
<div class="t" style="left:328.45px;width:40px;text-align:center;top:381.36px;font-size:7.4px;font-weight:normal;color:#000;">0.000000</div>
<div class="a" style="left:372.5px;top:380px;width:33.5px;height:9.600000000000023px;background:#fff;"></div>
<div class="t" style="left:369.25px;width:40px;text-align:center;top:381.36px;font-size:7.4px;font-weight:normal;color:#000;">0.000000</div>
<div class="a" style="left:413px;top:380px;width:33.5px;height:9.600000000000023px;background:#fff;"></div>
<div class="t" style="left:409.75px;width:40px;text-align:center;top:381.36px;font-size:7.4px;font-weight:normal;color:#000;">0.000000</div>
<div class="a" style="left:454.2px;top:380px;width:33.5px;height:9.600000000000023px;background:#fff;"></div>
<div class="t" style="left:450.95px;width:40px;text-align:center;top:381.36px;font-size:7.4px;font-weight:normal;color:#000;">0.000000</div>
<div class="a" style="left:65px;top:411px;width:457px;height:6px;background:#c8c8c8;"></div>
<div class="a" style="left:65px;top:411px;width:453px;height:2px;background:#e4e4e4"></div>
<div class="a" style="left:65px;top:416.5px;width:453px;height:15.5px;background:#e2e2e2;border-top:1px solid #b4b4b4"></div>
<div class="t" style="left:67.87px;top:421.11px;font-size:7.1px;font-weight:normal;color:#000;">Status:</div>
<div class="a" style="left:90px;top:417.5px;width:193px;height:13.5px;background:#fff;"></div>
<div class="t" style="left:90.06px;top:421.07px;font-size:7.35px;font-weight:normal;color:#000;">Initialized. Ready...</div>
<div class="a" style="left:283px;top:417.5px;width:28.5px;height:13.5px;background:#dcdcdc;"></div>
<div class="t" style="left:297.57px;top:421.09px;font-size:7.2px;font-weight:normal;color:#000;">File:</div>
<div class="a" style="left:311.5px;top:417.5px;width:206.5px;height:13.5px;background:#fff;"></div>
<div class="t" style="left:312.56px;top:421.08px;font-size:7.3px;font-weight:normal;color:#000;">j:\Software\Stokes\Fiber Stokes\Data\test-random2.DPT</div>
</body></html>
